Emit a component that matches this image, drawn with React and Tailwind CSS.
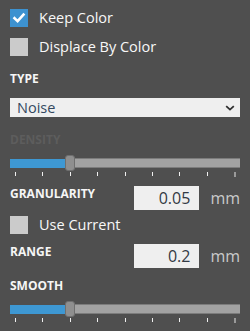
import React from "react";

function Checkbox({ checked, label }) {
  return (
    <div className="flex h-[18px] items-center gap-[11px]">
      {checked ? (
        <div className="flex h-[18px] w-[18px] items-center justify-center bg-[#3d92d0]">
          <svg width="18" height="18" viewBox="0 0 18 18">
            <path d="M4.5 9.2 L7.6 12.2 L13.5 5.6" fill="none" stroke="#ffffff" strokeWidth="2.6" strokeLinecap="square" />
          </svg>
        </div>
      ) : (
        <div className="h-[18px] w-[18px] bg-[#cbcbcb]" />
      )}
      <span className="text-[14.5px] font-medium leading-[18px] text-[#f8f8f8]">{label}</span>
    </div>
  );
}

function Label({ children, className = "", muted = false }) {
  return (
    <div
      className={
        "text-[12px] font-bold leading-[16px] " +
        (muted ? "text-[#5d5d5d] " : "text-[#f6f6f6] ") +
        className
      }
    >
      {children}
    </div>
  );
}

function Slider({ className = "" }) {
  const ticks = [0, 1, 2, 3, 4, 5, 6, 7];
  return (
    <div className={className}>
      <div className="flex h-[16px] items-center">
        <div className="h-[9px] w-[55px] bg-[#3e98d3]" />
        <div className="h-[16px] w-[10px] rounded-[3px] border border-[#6f6f6f] bg-[#8f8f8f]" />
        <div className="h-[10px] flex-1 border-y border-[#7c7c7c] bg-[#a2a2a2]" />
      </div>
      <div className="mt-[1px] flex h-[4px] justify-between pl-[5px] pr-[4px]">
        {ticks.map((t) => (
          <div key={t} className="h-[4px] w-[1px] bg-[#f0f0f0]" />
        ))}
        <div className="h-[5px] w-[2px] bg-[#9a9a9a]" />
      </div>
    </div>
  );
}

function NumberRow({ label, value, className = "" }) {
  return (
    <div className={"flex h-[24px] items-start justify-between " + className}>
      <Label>{label}</Label>
      <div className="flex items-center gap-[11px]">
        <div className="flex h-[24px] w-[65px] items-center justify-end bg-[#efefef] pr-[9px] text-[16px] font-medium text-[#333a44]">
          {value}
        </div>
        <span className="text-[16px] font-medium leading-[24px] text-[#cacaca]">mm</span>
      </div>
    </div>
  );
}

export default function App() {
  return (
    <div
      className="h-[331px] w-[250px] overflow-hidden bg-[#4f4f4f] px-[10px] pt-[9px]"
      style={{ fontFamily: '"Open Sans", "Noto Sans", sans-serif' }}
    >
      <Checkbox checked label="Keep Color" />
      <div className="mt-[11px]">
        <Checkbox label="Displace By Color" />
      </div>

      <Label className="mt-[15px]">TYPE</Label>
      <div className="mt-[11px] flex h-[19px] items-center justify-between bg-[#efefef] pl-[7px] pr-[5px]">
        <span className="text-[14.5px] font-medium leading-[19px] text-[#34495f]">Noise</span>
        <svg width="10" height="6" viewBox="0 0 10 6">
          <path d="M1.2 1.2 L5 4.6 L8.8 1.2" fill="none" stroke="#2e2e2e" strokeWidth="1.8" />
        </svg>
      </div>

      <Label muted className="mt-[15px]">DENSITY</Label>
      <Slider className="mt-[7px]" />

      <NumberRow label="GRANULARITY" value="0.05" className="mt-[10px]" />
      <div className="mt-[6px]">
        <Checkbox label="Use Current" />
      </div>
      <NumberRow label="RANGE" value="0.2" className="mt-[10px]" />

      <Label className="mt-[10px]">SMOOTH</Label>
      <Slider className="mt-[7px]" />
    </div>
  );
}
